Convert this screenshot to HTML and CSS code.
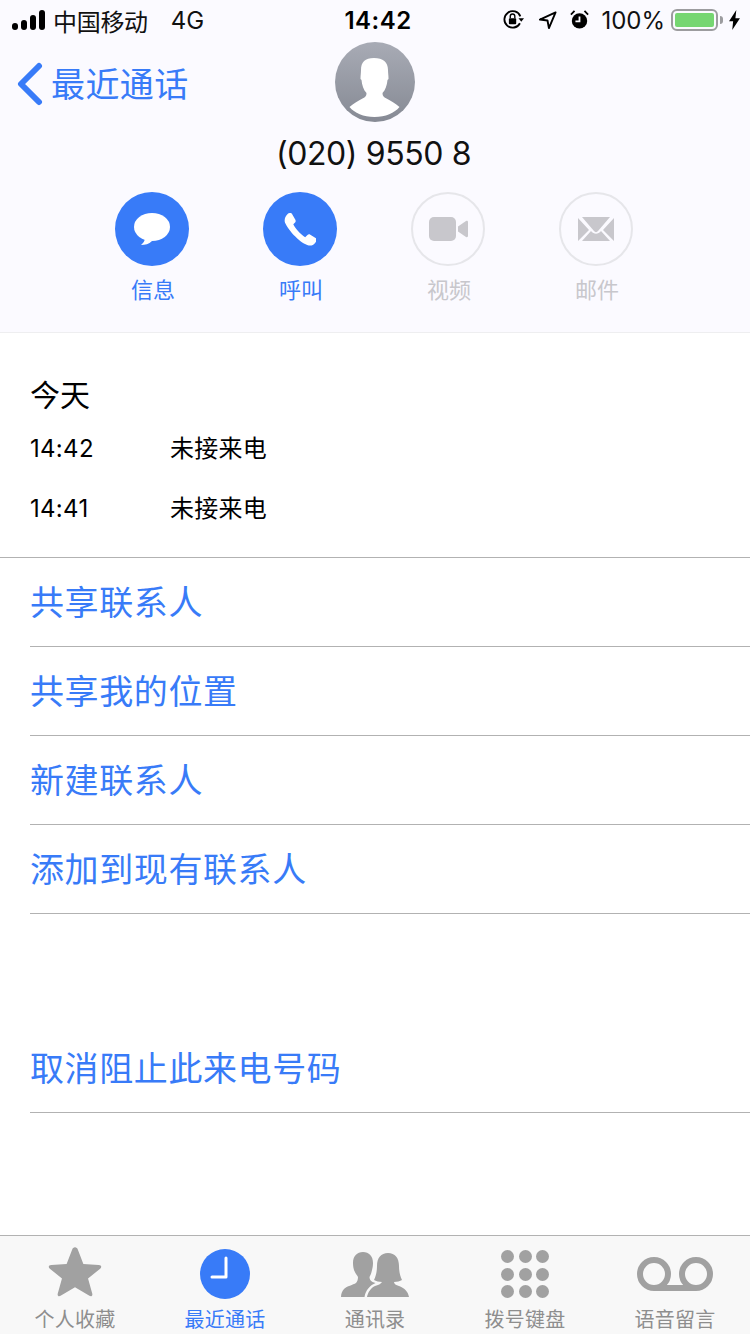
FILE: index.html
```html
<!DOCTYPE html>
<html lang="zh">
<head>
    <meta charset="UTF-8">
    <title>最近通话</title>
    <link rel="stylesheet" href="styles.css">
</head>
<body>
<div class="page">
    <header class="head">
        <div class="status">
            <div class="status-left">
                <svg class="signal" width="34" height="20" viewBox="0 0 34 20"><rect x="0" y="13" width="6" height="7" rx="3"/><rect x="9" y="10" width="6" height="10" rx="3"/><rect x="18" y="5" width="6" height="15" rx="3"/><rect x="27" y="0" width="6" height="20" rx="3"/></svg>
                <span class="carrier">中国移动</span>
                <span class="net">4G</span>
            </div>
            <div class="clock">14:42</div>
            <div class="status-right">
                <svg width="22" height="22" viewBox="0 0 24 24"><path d="M19.600 15.500A9 9 0 1 1 20 8" fill="none" stroke="#000" stroke-width="2"/><path d="M18 10h6l-3 4z"/><rect x="7.500" y="10" width="8" height="6.500" rx="1"/><path d="M9 10V8a2.500 2.500 0 0 1 5 0v2" fill="none" stroke="#000" stroke-width="1.500"/></svg>
                <svg class="locate" width="19" height="20" viewBox="0 0 20 20"><path d="M18.500 2 2 9.500l8 1 1.500 8z" fill="none" stroke="#000" stroke-width="2" stroke-linejoin="round"/></svg>
                <svg class="alarm" width="19" height="20" viewBox="0 0 21 22"><circle cx="10.500" cy="12" r="8.500"/><path d="M10.500 7v5.500H6" fill="none" stroke="#fbfaff" stroke-width="2"/><path d="M1 5 5 1M20 5l-4-4" stroke="#000" stroke-width="2"/></svg>
                <span class="percent">100%</span>
                <div class="battery"><div class="battery-fill"></div></div>
                <svg width="11" height="20" viewBox="0 0 12 22"><path d="M8 0 0 12.500h4.500L3.500 22 12 9H7z"/></svg>
            </div>
        </div>
        <div class="contact">
            <a class="back">
                <svg width="28" height="44" viewBox="0 0 28 44"><path d="M23 4 5 22l18 18" fill="none" stroke="#387bf8" stroke-width="6" stroke-linecap="round" stroke-linejoin="round"/></svg>
                <span class="back-text">最近通话</span>
            </a>
            <div class="avatar">
                <svg width="80" height="80" viewBox="0 0 80 80">
                    <defs><linearGradient id="ava" x1="0" y1="0" x2="0" y2="1"><stop offset="0" stop-color="#a8abb5"/><stop offset="1" stop-color="#868a94"/></linearGradient></defs>
                    <circle cx="40" cy="40" r="40" fill="url(#ava)"/>
                    <path d="M39 16c9 0 14 4 14 12 0 3 .5 5 .5 9l-1 1c-.5 5-2 10-5 13 0 3 1 4 4 5.500 4 2 9 5 13 8.500-5 6-14 10-25 10s-20-4-25-10c4-3.500 9-6.500 13-8.500 3-1.500 4-2.500 4-5.500-3-3-4.500-8-5-13l-1-1c0-4 .5-6 .5-9 0-8 4-12 13-12z" fill="#fff"/>
                </svg>
            </div>
            <div class="number">(020) 9550 8</div>
        </div>
        <div class="actions">
            <div class="action">
                <div class="disc disc-on">
                    <svg width="36" height="32" viewBox="0 0 36 32"><ellipse cx="18" cy="14" rx="18" ry="14"/><path d="M11 25c0 3-2 5-4 7 4 0 8-1 11-4z"/></svg>
                </div>
                <span class="action-label">信息</span>
            </div>
            <div class="action">
                <div class="disc disc-on">
                    <svg width="32" height="33" viewBox="2.500 1.500 31 32"><path d="M6 2.500c1-1 3-1.500 4-.5l3.500 6c.5 1 .5 2-.5 3l-1.500 1.500c2 4 7 10 11.500 12.500l2-2c1-1 2-1 3-.5l5.500 3.500c1 1 .5 3-.5 4-2 2.500-4 3.500-6.500 3C19 31.500 7 19 3.500 11 2.500 8 3.500 5 6 2.500z"/></svg>
                </div>
                <span class="action-label">呼叫</span>
            </div>
            <div class="action action-off">
                <div class="disc disc-off">
                    <svg width="39" height="24" viewBox="0 0 39 24"><rect width="27" height="24" rx="5"/><path d="M29 9.500 37 4c1-.5 2 0 2 1v14c0 1-1 1.500-2 1l-8-5.500z"/></svg>
                </div>
                <span class="action-label">视频</span>
            </div>
            <div class="action action-off">
                <div class="disc disc-off">
                    <svg width="36" height="24" viewBox="0 0 36 24"><path d="M4 0h28L20 14c-1 1.500-3 1.500-4 0zM0 1l11 12L0 24zM36 1v23L25 13zM4 24l9-10c3 3.500 7 3.500 10 0l9 10z"/></svg>
                </div>
                <span class="action-label">邮件</span>
            </div>
        </div>
    </header>

    <section class="calls">
        <div class="day">今天</div>
        <div class="call"><span class="call-time">14:42</span><span class="call-type">未接来电</span></div>
        <div class="call"><span class="call-time">14:41</span><span class="call-type">未接来电</span></div>
    </section>

    <ul class="links">
        <li>共享联系人</li>
        <li>共享我的位置</li>
        <li>新建联系人</li>
        <li>添加到现有联系人</li>
    </ul>

    <ul class="links links-block">
        <li>取消阻止此来电号码</li>
    </ul>

    <nav class="tabs">
        <a class="tab">
            <div class="tab-icon tab-icon-star">
                <svg width="54" height="51" viewBox="0 0 58 54"><path d="M29 1c1.500 0 2.500 1 3 2.500l6 15.500 16.500 1c3 .2 3.500 2.500 1.500 4L43 34.500l4.500 16c.7 2.500-1 3.700-3 2.500L29 44l-15.500 9c-2 1.200-3.700 0-3-2.500l4.500-16L2 24c-2-1.500-1.500-3.800 1.500-4L20 19l6-15.500C26.500 2 27.500 1 29 1z"/></svg>
            </div>
            <span>个人收藏</span>
        </a>
        <a class="tab tab-on">
            <div class="tab-icon">
                <svg width="50" height="50" viewBox="0 0 50 50"><circle cx="25" cy="25" r="25" fill="#387bf8"/><path d="M26 9v19H12" fill="none" stroke="#fff" stroke-width="3" stroke-linecap="round" stroke-linejoin="round"/></svg>
            </div>
            <span>最近通话</span>
        </a>
        <a class="tab">
            <div class="tab-icon">
                <svg width="68" height="45" viewBox="0 0 68 45"><path d="M22 0c6 0 10 4 10 11 0 3-.5 5-1 7-.5 3-1.500 5-2.500 7 0 2 1 4 3 5l3 1c-5 2-10 7-11 14H0c0-3 1-6 3-8 3-3 9-4 12-6 1-1 2-3 2-6-1-2-3-4-4-7-.5-2-1-4-1-7C12 4 16 0 22 0z"/><path d="M47 1c7 0 11 5 11 13 0 5 1 10 3 14-2 1-5 2-8 2 0 2 2 3 5 4 5 2 9 5 10 11H26c1-5 4-9 8-11 3-1 6-2 7-4-3 0-6-1-8-2 2-4 3-9 3-14 0-8 4-13 11-13z"/></svg>
            </div>
            <span>通讯录</span>
        </a>
        <a class="tab">
            <div class="tab-icon">
                <div class="keypad"><i></i><i></i><i></i><i></i><i></i><i></i><i></i><i></i><i></i></div>
            </div>
            <span>拨号键盘</span>
        </a>
        <a class="tab">
            <div class="tab-icon">
                <svg width="76" height="34" viewBox="0 0 76 34"><circle cx="17" cy="17" r="14" fill="none" stroke="#a1a1a1" stroke-width="6"/><circle cx="59" cy="17" r="14" fill="none" stroke="#a1a1a1" stroke-width="6"/><path d="M17 31h42" stroke="#a1a1a1" stroke-width="6"/></svg>
            </div>
            <span>语音留言</span>
        </a>
    </nav>
</div>
</body>
</html>
```
FILE: styles.css
```css
html, body {
    margin: 0;
    padding: 0;
}

body {
    font-family: "Inter", "Noto Sans CJK SC", sans-serif;
    background: #fff;
    color: #000;
}

ul {
    margin: 0;
    padding: 0;
    list-style: none;
}

.page {
    width: 750px;
    height: 1334px;
    display: flex;
    flex-direction: column;
    overflow: hidden;
}

/* top area */
.head {
    height: 333px;
    box-sizing: border-box;
    flex: none;
    background: #fbfaff;
    border-bottom: 1px solid #eeeef0;
}

.status {
    height: 40px;
    padding: 0 10px 0 12px;
    display: grid;
    grid-template-columns: 1fr auto 1fr;
    align-items: center;
}

.status-left,
.status-right {
    display: flex;
    align-items: center;
    font-size: 24px;
    color: #111;
}

.status-right {
    justify-self: end;
}

.signal {
    margin-right: 7px;
}

.carrier {
    letter-spacing: -.3px;
}

.net {
    margin-left: 23px;
}

.clock {
    padding-left: 4px;
    font-size: 24px;
    font-weight: 600;
    letter-spacing: .5px;
}

.locate {
    margin-left: 14px;
}

.alarm {
    margin-left: 13px;
}

.percent {
    margin-left: 12px;
}

.battery {
    width: 47px;
    height: 22px;
    margin: 0 11px 0 6px;
    padding: 2px;
    box-sizing: border-box;
    border: 2px solid #9c9c9f;
    border-radius: 6px;
    position: relative;
}

.battery::after {
    content: "";
    position: absolute;
    right: -7px;
    top: 5px;
    width: 3px;
    height: 8px;
    background: #9c9c9f;
    border-radius: 0 3px 3px 0;
}

.battery-fill {
    height: 100%;
    background: #76d672;
    border-radius: 2px;
}

.contact {
    height: 138px;
    display: grid;
    grid-template-columns: 1fr auto 1fr;
    grid-template-rows: 82px auto;
    justify-items: center;
}

.back {
    justify-self: start;
    align-self: start;
    margin: 18px 0 0 16px;
    display: flex;
    align-items: center;
    gap: 7px;
    font-size: 34px;
    letter-spacing: .4px;
    color: #387bf8;
}

.back-text {
    padding-bottom: 2px;
}

.avatar {
    margin-top: 2px;
    height: 80px;
}

.number {
    grid-column: 1 / -1;
    margin-top: 11px;
    padding-right: 3px;
    font-size: 32px;
    line-height: 42px;
    letter-spacing: -.4px;
    color: #111;
}

.actions {
    display: flex;
    justify-content: center;
    gap: 74px;
    margin-top: 14px;
    padding-right: 2px;
}

.action {
    width: 74px;
    display: flex;
    flex-direction: column;
    align-items: center;
    gap: 9px;
}

.disc {
    width: 74px;
    height: 74px;
    box-sizing: border-box;
    border-radius: 50%;
    display: flex;
    align-items: center;
    justify-content: center;
}

.disc-on {
    background: #387bf8;
    fill: #fff;
}

.disc-off {
    border: 2px solid #e6e6ea;
    fill: #c8c7cc;
}

.action-label {
    margin-left: 2px;
    font-size: 22px;
    line-height: 30px;
    color: #387bf8;
}

.action-off .action-label {
    color: #c8c7cc;
}

/* call log */
.calls {
    height: 225px;
    box-sizing: border-box;
    flex: none;
    padding: 42px 0 0 30px;
    border-bottom: 1px solid #b2b2b2;
}

.day {
    font-size: 30px;
    line-height: 40px;
}

.call {
    display: flex;
    height: 60px;
    align-items: center;
    font-size: 24px;
}

.calls .day + .call {
    margin-top: 3px;
}

.call-time {
    width: 140px;
    letter-spacing: .3px;
}

.call-type {
    padding-bottom: 4px;
    letter-spacing: .25px;
}

.links li {
    height: 89px;
    box-sizing: border-box;
    margin-left: 30px;
    padding-bottom: 4px;
    border-bottom: 1px solid #b2b2b2;
    display: flex;
    align-items: center;
    font-size: 34px;
    letter-spacing: .6px;
    color: #387bf8;
}

.links-block {
    margin-top: 110px;
}

/* tab bar */
.tabs {
    margin-top: auto;
    height: 99px;
    box-sizing: border-box;
    flex: none;
    background: #f8f8f8;
    border-top: 1px solid #b2b2b2;
    display: flex;
    overflow: hidden;
}

.tab {
    width: 150px;
    padding-top: 2px;
    display: flex;
    flex-direction: column;
    align-items: center;
    fill: #a1a1a1;
    font-size: 20px;
    line-height: 24px;
    color: #8e8e8e;
}

.tab span {
    margin-top: -2px;
    letter-spacing: .2px;
}

.tab-icon {
    height: 72px;
    display: flex;
    align-items: center;
    justify-content: center;
}

.tab-icon-star {
    padding-bottom: 5px;
    height: 67px;
}

.tab-on {
    color: #387bf8;
}

.keypad {
    display: grid;
    grid-template-columns: repeat(3, 13px);
    gap: 4.5px;
}

.keypad i {
    width: 13px;
    height: 13px;
    border-radius: 50%;
    background: #a1a1a1;
}
```
